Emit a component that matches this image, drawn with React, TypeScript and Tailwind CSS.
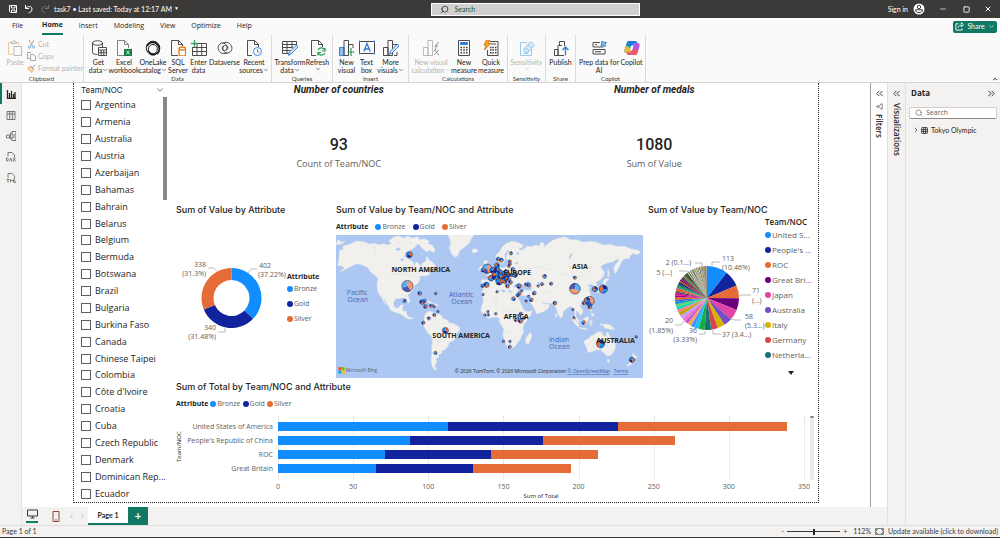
import React, { useState } from 'react';
import { ChevronDown, ChevronRight, ChevronsLeft, ChevronsRight, ChevronUp, Filter, Minus, Search, Square, X } from 'lucide-react';

const BRONZE = '#118dff';
const GOLD = '#12239e';
const SILVER = '#e66c37';

const countries = [
    'Argentina', 'Armenia', 'Australia', 'Austria', 'Azerbaijan', 'Bahamas', 'Bahrain', 'Belarus',
    'Belgium', 'Bermuda', 'Botswana', 'Brazil', 'Bulgaria', 'Burkina Faso', 'Canada', 'Chinese Taipei',
    'Colombia', "Côte d'Ivoire", 'Croatia', 'Cuba', 'Czech Republic', 'Denmark', 'Dominican Rep...', 'Ecuador',
];

const medals = [
    { team: 'United States of America', bronze: 113, gold: 113, silver: 113 },
    { team: "People's Republic of China", bronze: 88, gold: 88, silver: 88 },
    { team: 'ROC', bronze: 71, gold: 71, silver: 71 },
    { team: 'Great Britain', bronze: 65, gold: 65, silver: 65 },
];

const pieValues = [
    113, 88, 71, 65, 58, 46, 40, 37, 36, 33, 24, 21, 20, 20, 20, 19, 19, 17, 15, 15, 14, 13, 11, 11, 11, 10, 10,
    9, 9, 9, 9, 8, 8, 8, 8, 7, 7, 7, 7, 7, 7, 6, 6, 6, 5, 5, 5, 5, 5, 4, 4, 4, 4, 4, 4, 4, 4, 4, 3, 3, 3, 3, 3, 3,
    2, 2, 2, 2, 2, 2, 1, 1, 1, 1, 1, 1,
];

const pieColors = [
    '#118dff', '#12239e', '#e66c37', '#6b007b', '#e044a7', '#744ec2', '#d9b300', '#d64550', '#197278', '#1aab40',
    '#15c6f4', '#4092ff', '#ffa058', '#be5dc9', '#f472d0', '#b5a1ff', '#c4a200', '#ff8080', '#00dbbc', '#5bd667',
    '#0091d5', '#4668c5', '#ff6300', '#99008a', '#ec008c', '#533285', '#99700a', '#ff4141', '#1f9a85', '#25891c',
    '#0057a2', '#002050', '#c94f0f', '#450f54', '#b60064', '#34124f', '#6a5a29', '#1aab40', '#ba141a', '#0c3d37',
    '#0b511f', '#e8d166', '#2e4a7d', '#d8d7bf', '#605e5c', '#f5c869', '#4a7fb0', '#333f48', '#e3d96a', '#5a5a46',
    '#8ea7d8', '#e8c83a', '#3b4a6b', '#c9c9c9', '#6a5a29', '#f0e27a', '#2b2f45', '#9aa0a8', '#d9b300', '#2e4a7d',
    '#a8a58a', '#3a3a3a', '#e0c95a', '#44506b', '#8a8a6a', '#2b2b2b', '#b8a040', '#555555', '#7a6a3a', '#333f48',
    '#88806a', '#444444', '#9a8a5a', '#3b3a39', '#a19f9d', '#c08a6a',
];

const teamLegend = [
    ['United S...', 'bg-[#118dff]'],
    ["People's ...", 'bg-[#12239e]'],
    ['ROC', 'bg-[#e66c37]'],
    ['Great Bri...', 'bg-[#6b007b]'],
    ['Japan', 'bg-[#e044a7]'],
    ['Australia', 'bg-[#744ec2]'],
    ['Italy', 'bg-[#d9b300]'],
    ['Germany', 'bg-[#d64550]'],
    ['Netherla...', 'bg-[#197278]'],
];

const attributeLegend = [
    ['Bronze', 'bg-[#118dff]'],
    ['Gold', 'bg-[#12239e]'],
    ['Silver', 'bg-[#e66c37]'],
];

// x, y, radius, rotation
const bubbles = [
    [240, 164, 9, 0], [234, 258, 17, 0], [225, 303, 5, 200], [271, 280, 6, 90], [319, 280, 4, 0], [278, 306, 7, 90],
    [286, 302, 5, 0], [288, 319, 6, 30], [305, 317, 5, 90], [314, 319, 4, 0], [325, 335, 4, 200], [315, 345, 5, 90],
    [298, 355, 5, 120], [282, 368, 5, 60], [348, 391, 9, 0], [318, 458, 5, 300], [544, 160, 5, 200], [506, 177, 6, 60],
    [516, 180, 6, 120], [541, 184, 5, 0], [541, 192, 5, 30], [538, 199, 4, 100], [502, 196, 7, 240], [473, 206, 14, 20],
    [460, 210, 6, 0], [490, 211, 9, 0], [503, 208, 8, 90], [498, 220, 10, 150], [512, 216, 7, 60], [485, 234, 9, 240],
    [522, 222, 8, 30], [530, 214, 6, 120], [550, 208, 6, 90], [513, 230, 9, 60], [500, 234, 7, 100], [509, 245, 10, 0],
    [520, 240, 8, 160], [530, 233, 7, 90], [538, 238, 6, 60], [527, 246, 6, 200], [543, 247, 6, 100], [536, 224, 7, 0],
    [546, 226, 5, 90], [556, 224, 8, 300], [534, 258, 6, 90], [460, 257, 6, 30], [471, 254, 8, 90], [568, 258, 7, 0],
    [590, 253, 5, 90], [598, 255, 6, 60], [461, 283, 4, 0], [503, 275, 4, 60], [552, 296, 6, 300], [564, 285, 5, 0],
    [570, 281, 5, 30], [576, 273, 4, 200], [597, 289, 4, 200], [605, 299, 6, 0], [590, 303, 4, 90], [614, 279, 6, 30],
    [626, 258, 4, 90], [638, 252, 5, 30], [645, 229, 6, 200], [665, 251, 5, 60], [676, 309, 6, 90], [736, 233, 5, 90],
    [736, 266, 16, 120], [796, 267, 8, 200], [821, 267, 12, 200], [780, 303, 14, 0], [772, 300, 8, 200], [763, 308, 6, 30],
    [781, 321, 6, 90], [730, 328, 4, 0], [733, 353, 4, 60], [762, 367, 6, 0], [475, 335, 4, 200], [466, 345, 4, 200],
    [476, 345, 4, 200], [499, 341, 4, 60], [574, 341, 5, 90], [573, 362, 7, 60], [584, 353, 5, 0], [559, 360, 5, 30],
    [522, 424, 4, 90], [541, 424, 4, 200], [541, 440, 5, 60], [813, 431, 12, 200], [920, 410, 4, 0], [907, 479, 8, 30],
];

const land = [
    'M30 152l12-4-2-9 20-6 22-10 24 3 14 6 16-2 14 5 12-4 14 4 10-5-8-8 12-8 18 3 9 8 14-6 10 10 14-2 6 10-8 8-10 5-14 6-4 14 12 8 12 6 6 12 6-12-2-14 4-10 14 3 6 10 10-3 6 10 12 8 9 12-8 7-18-2-10 8 14 1 4 9-14 5-8 4-10 6-2 9-12 9-5 13-10 9-6 8 5 9 2 11-6 2-5-13-9-2-11 2-12 1-7 11 1 11 6 6 9-1 5-8 9-1-3 12 1 6 11 2 1 9 6 8 11 2 0 4-13 0-12-8-12-8-14-4-15-7-5-12-8-12-6-12 3 14 5 9-7-8-7-15-8-11-6-12-1-20 3-14-10-12-12-9-10-14-14-6-14-5-12 3-12 7-18 10-14 4 16-11-10-6-12-3 4-9z',
    'M190 112l18-5 14 8 12-6 16 5 14-4 8 9 12-3 16 8-6 6 14 6 10 13-6 8-12-6-8 4-14-10-8-12-14 2-10-8-14 6-12-8-14 3z',
    'M355 105l6 12 3 14-5 12 7 18 10 11 9-4 5-15 16-12 14-12 5-12 9-12z',
    'M427 150l8-4 10 3-2 6-9 4-7-4z',
    'M286 345l7-9 9-3 8 5 15 1 12 8 4 9 12 3 5 8 15 4 16 9 3 9-9 10-3 13-8 10-13 5-3 10-9 12-8 2-2 9-10 3 0 9-7 4 2 9-6 10 3 9 5 4-9 0-7-10-3-16 2-18 0-22 2-19-3-15-12-11-11-19-3-12 5-11z',
    'M284 304l14-2 14 8-8 1-10-5zM314 311l9 1 4 5-11 0z',
    'M456 275l10-9 14-5 17-2 10 1 1 9 15 8 8-5 14 5 9-1 5 1 5 14 7 13 8 18 7 11 13 1 9-3-5 15-9 13-11 13-3 13 3 12-7 9-4 13-9 10-8 12-12 4-9-2-5-12-5-14-4-13 3-14-6-14-8-10 1-11-9-5-11 2-14 3-13-10-9-14 3-14 5-13z',
    'M603 396l4 11-5 16-6 9-7-3-1-12 6-10z',
    'M456 262l-1-21 4-2 19 1 0-10-8-7 9-5 11-8 9-5 3-9 5-3 2 11 14-1 9-4 4-11 6-4-8-3-4-8 3-13 6-8-5-2-9 13 3 13-5 11-7 4-5-11-7 3-6-6 1-12 11-9 7-14 14-12 15-6 17 3 20 9-8 9-8-2 4 8 12-3 9-10 12 2 13-5 12 3 6-12 8 4 2 10 10-9 12-9 20-8 19-4 16 9 20 0 18 8 22-3 20 3 18 8 22-2 20 6 22 0 22 8 18 3 9 7-10 7-12-4-8 5-4 10-13 1-9 6-6 14-9 18-6 7-4-16 6-13 11-12-9-3-8 8-17 3-12 5-9 5 2 9 9 8-2 11-12 14-12 6 3 11 5 9-5 6-8-9-4-10-9 0-8 4 9 5-4 7 5 13-2 12-7 9-10 6-10 4-3 4 8 11 1 10-9 8-3-8-8-6-1 15 9 14 1 8-7-6-6-14-1-18-8-4-3-9-10 5-13 11-2 14-6 8-8-16-6-16-3-7-10-7-20-1-7-5 0 5 9 4 6-4 6 7-5 10-16 10-17 6-5-10-12-22-5-4-1-8-2-12-11 1-14-1-3-9 14-7 14 1 10-2-4-8-8 0-9-7-6 2-8 0-7 10 0 8-4 5 0 9-6 0-9-15-11-7 4 11 9 7-9 8-4-12-12-12-11 2-11 11-7 10-7 2z',
    'M463 184l8-4 4 8-2 8 7 9 2 7-16 4 6-10-7-8zM452 199l8-2 2 8-8 7-6-3z',
    'M822 240l10-6 6 6-8 4-4 14-4 11-12 6-8 3-3-3 12-5 7-5zM835 208l4 9-1 15-4-4z',
    'M724 349l7 4 10 11 8 11-3 6-10-9-8-12zM748 382l14 2 12 3-2 2-22-4zM755 361l8-4 9-8 6 4-5 12-5 9-12-3zM780 363l7-3 2 4-5 3 3 9-5-1zM778 323l6 0 3 10-5-1zM784 340l8 0 1 8-7 0zM812 370l10 3 10-2 14 7 10 11-9-1-12-2-10-2-3-6-9-3z',
    'M762 424l14-8 10-10 10-4 8-7 13 1 2 9 9 4 3-14 6 4 4 12 8 9 8 11 1 12-7 13-5 8-14 4-8-10-7-3-2-7-14 1-12 5-14 3-4-13zM833 478l8 0-3 8-5-2z',
    'M908 459l7 7 9 3-8 7-4 9-10 10-10 3 2-5 12-10 4-10z',
    'M676 343l4-2 3 7-4 4zM25 119l12 7 10-3-8 9-19 3z',
];

const slice = (cx: number, cy: number, r: number, from: number, to: number, inner = 0) => {
    const point = (radius: number, turn: number) => {
        const angle = (turn - 0.25) * Math.PI * 2;
        return `${(cx + radius * Math.cos(angle)).toFixed(2)} ${(cy + radius * Math.sin(angle)).toFixed(2)}`;
    };
    const large = to - from > 0.5 ? 1 : 0;
    if (!inner) {
        return `M${cx} ${cy}L${point(r, from)}A${r} ${r} 0 ${large} 1 ${point(r, to)}Z`;
    }
    return `M${point(r, from)}A${r} ${r} 0 ${large} 1 ${point(r, to)}L${point(inner, to)}A${inner} ${inner} 0 ${large} 0 ${point(inner, from)}Z`;
};

/* ---------- ribbon icons ---------- */

const icons: Record<string, React.ReactNode> = {
    paste: (
        <g stroke="#b5b3b1">
            <path d="M5 2.5H1.5v12H6M9.5 2.5h2.500v3" stroke="#eac28c" />
            <path d="M4.500 3.500v-1.500h1.200a1.300 1.300 0 0 1 2.600 0h1.200v1.500z" />
            <path d="M7 6.500h7.500v9H7z" fill="#fafafa" />
        </g>
    ),
    getData: (
        <g>
            <path d="M1.500 3c0-3 10-3 10 0s-10 3-10 0v9.500c0 1.500 2.500 2 5 2M11.500 3v4" />
            <path d="M7.500 7.500h8v8h-8zM7.500 10h8M7.500 12.700h8M10.200 10v5.500M12.800 10v5.500" fill="#fff" />
        </g>
    ),
    excel: (
        <g>
            <path d="M8 15.500H1.500v-15h7l4 4V8M8.500.5v4h4" stroke="#797775" />
            <path d="M8 9h8v7H8z" fill="#107c41" stroke="none" />
            <path d="M10.200 10.500l3.500 4M13.700 10.500l-3.500 4" stroke="#fff" />
        </g>
    ),
    onelake: (
        <g stroke="#1b1a19">
            <circle cx="8" cy="8" r="6.800" strokeWidth="1" />
            <path d="M2 6c2-4 7-5 10-2 3 3 3 7 0 10" strokeWidth="1.800" />
            <path d="M4 12c-2-4 1-7.500 4-7.500 4 0 6 5 2.500 8.500-2 1.500-5 1-6.500-1z" strokeWidth="1" />
            <path d="M3 10c2 4 6 5 9 3l-2 2H6z" fill="#1b1a19" />
        </g>
    ),
    sql: (
        <g>
            <path d="M8 15.500H1.500v-15h7l4 4V6M8.500.5v4h4" />
            <path d="M9 8.500c0-2 6.500-2 6.500 0s-6.500 2-6.500 0v6c0 2 6.500 2 6.500 0v-6" stroke="#e07b1c" fill="#fff" strokeWidth="1.300" />
        </g>
    ),
    enter: (
        <g>
            <path d="M3 3.500h12.500v12H1.500V7M6 3.500v12M10.700 3.500v12M1.500 7.500h14M1.500 11.500h14" />
            <path d="M3.500 0v7M0 3.500h7" stroke="#33a35c" strokeWidth="1.300" />
        </g>
    ),
    dataverse: (
        <g>
            <path d="M13.500 4.500c3 3 1 8.500-3 8.500C5 13 4.500 5.500 8.500 5.500c3 0 3 4.500.5 4.500" />
            <path d="M2.500 11.500c-3-3-1-8.500 3-8.500 5.500 0 6 7.500 2 7.500-3 0-3-4.500-.5-4.500" />
            <path d="M5.500 3c3-1 6-1 8 1.500M10.500 13c-3 1-6 1-8-1.500" />
        </g>
    ),
    recent: (
        <g>
            <path d="M6 15.500H1.500v-15h7l4 4V7M8.500.5v4h4" />
            <circle cx="11.500" cy="11.500" r="4" stroke="#2b7cd3" fill="#fff" />
            <path d="M11.500 9v3h2" stroke="#2b7cd3" />
        </g>
    ),
    transform: (
        <g>
            <path d="M7 13.500H.5v-12h14V5M.5 4.500h14M.5 7.500h10M.5 10.500h8M5 1.500v12M10 1.500v7" />
            <path d="M6.500 15.500l1-3.500 7-7 1.500 2-7 7z" fill="#d5e6f7" stroke="#2b7cd3" />
        </g>
    ),
    refresh: (
        <g>
            <path d="M6 15.500H1.500v-15h7l4 4V7M8.500.5v4h4" />
            <path d="M15 11a3.700 3.700 0 0 0-7-1M8 12a3.700 3.700 0 0 0 7 1M15 8v3h-3M8 15.500V12.500h3" stroke="#2f9a52" strokeWidth="1.200" />
        </g>
    ),
    newVisual: (
        <g>
            <path d="M.5 7.500h4.500v8H.5z" fill="#8fc1ee" stroke="#2b7cd3" />
            <path d="M5 .5h4.500v15H5zM9.500 4.500H14V8M9.500 4.500V12" />
            <path d="M12 8v8M8.500 12h7" stroke="#2f9a52" strokeWidth="1.200" />
        </g>
    ),
    textBox: (
        <g>
            <path d="M.5 1.500h15v12H.5z" stroke="#333" />
            <path d="M4.800 11.500L8 3.500l3.200 8M6 9h4" stroke="#2b7cd3" strokeWidth="1.300" />
            <path d="M0 1h1v1H0zM15 1h1v1h-1zM0 13h1v1H0zM15 13h1v1h-1z" stroke="#2b7cd3" />
        </g>
    ),
    moreVisuals: (
        <g>
            <path d="M.5 7.500h4.500v8H.5zM5 .5h4.500v15H5zM9.500 4.500H14v2M11 15.500h3V12" />
            <path d="M6.500 14.500l1-3.500 7-7 1.500 2-7 7z" fill="#d5e6f7" stroke="#2b7cd3" />
        </g>
    ),
    visualCalc: (
        <g stroke="#b5b3b1">
            <path d="M.5 7.500h4.500v8H.5zM5 .5h4.500v15H5z" />
            <path d="M16 3c-2-1-2.500 1-3 4s-1 4-2 4M11.500 6H15M11.500 10c2 0 2 5 4.500 5M16 10c-2 1-3 4-5 5" stroke="#8f8d8b" />
        </g>
    ),
    measure: (
        <g>
            <path d="M2.500.5h11v15h-11z" />
            <path d="M4.500 2.500h7v2h-7z" fill="#2b7cd3" stroke="#2b7cd3" />
            <path d="M4.500 7.500h1.500M7.300 7.500h1.500M10 7.500h1.500M4.500 10h1.500M7.300 10h1.500M10 10h1.500M4.500 12.800h1.500M7.300 12.800h1.500M10 12.800h1.500" strokeWidth="1.500" />
        </g>
    ),
    quick: (
        <g>
            <path d="M7 1.500h8v14H4.500V10M7.500 4h5.500" />
            <path d="M7 7.500h1.500M9.300 7.500h1.500M12 7.500h1.500M7 10h1.500M9.300 10h1.500M12 10h1.500M7 12.800h1.500M9.300 12.800h1.500M12 12.800h1.500" strokeWidth="1.500" />
            <path d="M3.500 0H7L5 3.500h2.500L1.500 10l1.500-5H1z" fill="#f5a623" stroke="#d9731a" />
        </g>
    ),
    sensitivity: (
        <g stroke="#8cc3ea">
            <path d="M8 2.500H1.500v13h11V9" />
            <path d="M4.500 9.500l7-8 4 3.500-6 7-3.500.5z" fill="#d7eaf8" />
            <path d="M7 8l3 3M9 5l4 3.500M4.500 13.500h5" />
        </g>
    ),
    publish: (
        <g>
            <path d="M1.500 9.500H5v6H1.500zM5 15.500v-10h4M6.500 5.500v-4h5V6M5 15.500h6" />
            <path d="M12.500 15.500v-8M9.500 10l3-3 3 3" stroke="#2b7cd3" strokeWidth="1.300" />
        </g>
    ),
    prep: (
        <g>
            <path d="M9 2.500H2v4.500h10.500M2 9.500h12v4.500H2zM4 4.700h2M4 11.700h6" />
            <path d="M11 1l2 1.500L15.500 2 14 4.500l.5 2-2.500-1-2 1 .5-2.500z" fill="#8fc1ee" stroke="#2b7cd3" />
        </g>
    ),
    copilot: (
        <g stroke="none">
            <path d="M5 1h6c1.500 0 2 1 2.500 2.500H9.500L7 11c-.5 1.500-1 2-2.500 2H2.500C.5 13 0 11.500.5 9.500L2.500 3.500C3 2 3.500 1 5 1z" fill="#25b0b0" />
            <path d="M2 5l-1.500 5C0 12 .8 13 2.500 13h2c1.500 0 2-.5 2.500-2l.5-1.500z" fill="#f2b632" />
            <path d="M3 3c.5-1.500 1-2 2.500-2H11c1.500 0 2 1 2.500 2.500H9.500L8 6H2z" fill="#1f7be0" />
            <path d="M11 15H5c-1.500 0-2-1-2.500-2.500h4L9 5c.5-1.500 1-2 2.500-2h2c2 0 2.500 1.500 2 3.500l-2 6c-.5 1.500-1 2.500-2.500 2.500z" fill="#b558e0" />
            <path d="M11 15H5c-1.500 0-2-1-2.500-2.500h4L8 9.500h6.500l-1 3c-.5 1.500-1 2.500-2.500 2.500z" fill="#f0566c" />
            <path d="M7.200 5.500h2.300l-1.300 5H6z" fill="#fff" />
        </g>
    ),
};

const Icon = ({ name }: { name: string }) => (
    <svg viewBox="0 0 16 16" className="size-4 shrink-0" fill="none" stroke="#3b3a39" strokeWidth="0.9">
        {icons[name]}
    </svg>
);

interface RibbonItemProps {
    icon: string;
    lines: string[];
    width: string;
    menu?: boolean;
    disabled?: boolean;
}

const RibbonItem = ({ icon, lines, width, menu, disabled }: RibbonItemProps) => (
    <button
        disabled={disabled}
        className={`flex shrink-0 flex-col items-center whitespace-nowrap text-[7px] leading-[8px] ${width} ${disabled ? 'text-[#b5b3b1]' : 'text-[#252423]'}`}
    >
        <Icon name={icon} />
        <span className="mt-[2px]">{lines[0]}</span>
        <span className="flex items-center">
            {lines[1]}
            {menu && <ChevronDown className="size-[6px]" />}
        </span>
    </button>
);

const RibbonGroup = ({ label, width, children }: { label: string; width: string; children: React.ReactNode }) => (
    <div className={`flex h-[47px] shrink-0 flex-col items-center justify-between border-r border-[#dddbd9] ${width}`}>
        <div className="flex pt-[5px]">{children}</div>
        <span className="text-[6px] leading-[6px] text-[#3b3a39]">{label}</span>
    </div>
);

const TitleBar = () => (
    <header className="flex h-[18px] shrink-0 items-center bg-[#3b3a39] font-['Lato',sans-serif] text-[7px] text-white">
        <div className="flex flex-[43] items-center">
            <button aria-label="Save" className="ml-2">
                <svg viewBox="0 0 10 10" className="size-[10px]" fill="none" stroke="#fff">
                    <path d="M1.500 1.500h7v7H2.500l-1-1zM3.500 1.500v2.500h3.500V1.500M3.500 8.500V6h3.500v2.500" />
                </svg>
            </button>
            <button aria-label="Undo" className="ml-[6px]">
                <svg viewBox="0 0 10 10" className="size-[10px]" fill="none" stroke="#fff">
                    <path d="M1.500 1v3.500H5M1.500 4.500C4 1.500 8 2 8 5S5.500 8.500 4.500 9" />
                </svg>
            </button>
            <button aria-label="Redo" className="ml-[6px]" disabled>
                <svg viewBox="0 0 10 10" className="size-[10px]" fill="none" stroke="#777573">
                    <path d="M8.500 1v3.500H5M8.500 4.500C6 1.500 2 2 2 5s2.500 3.500 3.500 4" />
                </svg>
            </button>
            <button className="ml-1 flex items-center whitespace-nowrap">
                task7 • Last saved: Today at 12:17 AM
                <span className="ml-[2px] text-[5px]">▼</span>
            </button>
        </div>
        <label className="flex h-[13px] w-[209px] items-center border border-white bg-[#d2d0ce] px-2 text-[#0b5a4c]">
            <Search className="mr-[6px] size-[9px] -scale-x-100 text-[#252423]" />
            <input
                aria-label="Search"
                placeholder="Search"
                className="min-w-0 flex-1 bg-transparent text-[7px] outline-none placeholder:text-[#0b5a4c]"
            />
        </label>
        <div className="flex flex-[36] items-center justify-end">
            <button className="flex items-center gap-[5px]">
                Sign in
                <svg viewBox="0 0 12 12" className="size-3">
                    <circle cx="6" cy="6" r="5.500" fill="#fff" />
                    <circle cx="6" cy="4" r="1.700" fill="none" stroke="#3b3a39" />
                    <path d="M2.500 6.800h7c0 3.800-7 3.800-7 0z" fill="none" stroke="#3b3a39" />
                </svg>
            </button>
            <button aria-label="Minimize" className="ml-[14px]"><Minus className="size-2" /></button>
            <button aria-label="Maximize" className="ml-4"><Square className="size-[7px]" strokeWidth={3} /></button>
            <button aria-label="Close" className="mr-2 ml-[14px]"><X className="size-2" strokeWidth={3} /></button>
        </div>
    </header>
);

const Ribbon = () => (
    <section className="flex h-[65px] shrink-0 flex-col border-b border-[#d6d4d2] bg-[#fafafa]">
        <nav className="flex h-[17px] shrink-0 items-center text-[7px] text-[#252423]">
            <button className="ml-3">File</button>
            <button className="ml-[19px] flex h-[15px] items-center self-end border-b-2 border-[#117865] pb-[2px] font-bold">Home</button>
            <button className="ml-4">Insert</button>
            <button className="ml-4">Modeling</button>
            <button className="ml-4">View</button>
            <button className="ml-4">Optimize</button>
            <button className="ml-4">Help</button>
            <button className="mr-[3px] ml-auto flex h-3 w-11 items-center justify-center gap-[3px] rounded-[2px] bg-[#117865] font-['Lato',sans-serif] text-white">
                <svg viewBox="0 0 10 10" className="size-[9px]" fill="none" stroke="#fff">
                    <path d="M4 2H1v7h7V7M3.500 6.500C4 4 5.500 3.500 7 3.500V5.500L9.500 3 7 .7v1.800" />
                </svg>
                Share
                <ChevronDown className="size-[7px]" />
            </button>
        </nav>
        <div className="flex items-start font-['Lato',sans-serif]">
            <div className="flex h-[47px] w-[84px] shrink-0 flex-col justify-between border-r border-[#dddbd9] text-[7px] text-[#b5b3b1]">
                <div className="flex pt-[5px] pl-[7px]">
                    <button disabled className="flex w-4 flex-col items-center">
                        <Icon name="paste" />
                        <span className="mt-[2px] leading-[8px]">Paste</span>
                    </button>
                    <div className="ml-1 flex flex-col gap-[3px] leading-[9px]">
                        <button disabled className="flex items-center gap-[2px]">
                            <svg viewBox="0 0 9 9" className="size-[9px]" fill="none" stroke="#a9a7a5">
                                <path d="M2 0l3.500 6M7 0L3.500 6" />
                                <circle cx="2.500" cy="7" r="1.200" stroke="#8bb7dd" />
                                <circle cx="6.500" cy="7" r="1.200" stroke="#8bb7dd" />
                            </svg>
                            Cut
                        </button>
                        <button disabled className="flex items-center gap-[2px]">
                            <svg viewBox="0 0 9 9" className="size-[9px]" fill="none" stroke="#a9a7a5">
                                <path d="M3 6.500H.5v-6h3.500M3.500 2.500h3l2 2v4h-5z" />
                            </svg>
                            Copy
                        </button>
                        <button disabled className="flex items-center gap-[2px] whitespace-nowrap">
                            <svg viewBox="0 0 9 9" className="size-[9px]" fill="none" stroke="#a9a7a5">
                                <path d="M.5 4l3-1.500 3 3L4.500 8.500z" fill="#f6d6ae" stroke="#e5b375" />
                                <path d="M4 2l3 3M5.500 3.500L8.500.5" />
                            </svg>
                            Format painter
                        </button>
                    </div>
                </div>
                <span className="text-center text-[6px] leading-[6px] text-[#3b3a39]">Clipboard</span>
            </div>
            <RibbonGroup label="Data" width="w-[188px]">
                <RibbonItem icon="getData" lines={['Get', 'data']} width="w-[23px]" menu />
                <RibbonItem icon="excel" lines={['Excel', 'workbook']} width="w-[28px]" />
                <RibbonItem icon="onelake" lines={['OneLake', 'catalog']} width="w-[30px]" menu />
                <RibbonItem icon="sql" lines={['SQL', 'Server']} width="w-[20px]" />
                <RibbonItem icon="enter" lines={['Enter', 'data']} width="w-[21px]" />
                <RibbonItem icon="dataverse" lines={['Dataverse']} width="w-[31px]" />
                <RibbonItem icon="recent" lines={['Recent', 'sources']} width="w-[28px]" menu />
            </RibbonGroup>
            <RibbonGroup label="Queries" width="w-[61px]">
                <RibbonItem icon="transform" lines={['Transform', 'data']} width="w-[31px]" menu />
                <RibbonItem icon="refresh" lines={['Refresh', '']} width="w-[24px]" menu />
            </RibbonGroup>
            <RibbonGroup label="Insert" width="w-[76px]">
                <RibbonItem icon="newVisual" lines={['New', 'visual']} width="w-[20px]" />
                <RibbonItem icon="textBox" lines={['Text', 'box']} width="w-[20px]" />
                <RibbonItem icon="moreVisuals" lines={['More', 'visuals']} width="w-[28px]" menu />
            </RibbonGroup>
            <RibbonGroup label="Calculations" width="w-[99px]">
                <RibbonItem icon="visualCalc" lines={['New visual', 'calculation']} width="w-[39px]" menu disabled />
                <RibbonItem icon="measure" lines={['New', 'measure']} width="w-[27px]" />
                <RibbonItem icon="quick" lines={['Quick', 'measure']} width="w-[27px]" />
            </RibbonGroup>
            <RibbonGroup label="Sensitivity" width="w-[38px]">
                <RibbonItem icon="sensitivity" lines={['Sensitivity', '']} width="w-[30px]" menu disabled />
            </RibbonGroup>
            <RibbonGroup label="Share" width="w-[30px]">
                <RibbonItem icon="publish" lines={['Publish']} width="w-[28px]" />
            </RibbonGroup>
            <RibbonGroup label="Copilot" width="w-[70px]">
                <RibbonItem icon="prep" lines={['Prep data for', 'AI']} width="w-[42px]" />
                <RibbonItem icon="copilot" lines={['Copilot']} width="w-[23px]" />
            </RibbonGroup>
            <button aria-label="Collapse ribbon" className="mr-[2px] ml-auto self-end">
                <ChevronUp className="size-[6px]" strokeWidth={4} />
            </button>
        </div>
    </section>
);

const viewIcons = [
    { name: 'Report view', d: 'M1.500 1v8.500H10M3.500 4v5M5.500 2v7M7.500 5v4M9 3v6' },
    { name: 'Table view', d: 'M1 1.500h8v8H1zM1 4h8M3.700 1.500v8M6.300 1.500v8' },
    { name: 'Model view', d: 'M.5 4h3v3h-3zM6 .5h4v3.500H6zM6 6h4v3.500H6zM3.500 5.500h1V2H6M4.500 5.500V8H6' },
    { name: 'DAX query view', d: 'M2 4.500v-4h4l2.500 2.500V6M.5 6v3c2.500 0 2.500-3 0-3zM3.500 9.500l1.200-3.500 1.200 3.500M7 6l2.500 3.500M9.500 6L7 9.500' },
    { name: 'TMDL view', d: 'M2 5v-4.500h4l2.500 2.500V6M.5 6.500h3M2 6.500v3M4.500 9.500v-3L6 8l1.500-1.500v3M8.700 6.500v3H10' },
];

const ViewRail = () => (
    <nav className="flex w-[22px] shrink-0 flex-col border-r border-[#e6e4e2] bg-[#f3f2f1]">
        {viewIcons.map(({ name, d }, i) => (
            <button
                key={name}
                aria-label={name}
                className={`flex h-[21px] w-full items-center justify-center border-l-2 pr-[2px] ${i === 0 ? 'border-[#117865]' : 'border-transparent'}`}
            >
                <svg viewBox="0 0 10 10" className="size-[10px]" fill="none" stroke={i === 0 ? '#252423' : '#605e5c'} strokeWidth={i === 0 ? 1.3 : 0.8}>
                    <path d={d} />
                </svg>
            </button>
        ))}
    </nav>
);

const Slicer = () => (
    <div className="flex w-24 shrink-0 flex-col pl-[7px]">
        <div className="flex h-[14px] shrink-0 items-center justify-between pr-[5px] font-['Inter',sans-serif] text-[8px] text-[#252423]">
            Team/NOC
            <ChevronDown className="size-[10px]" strokeWidth={1.5} />
        </div>
        <div className="flex min-h-0 flex-1">
            <ul className="flex min-w-0 flex-1 flex-col">
                {countries.map((country) => (
                    <li key={country} className="flex flex-1 items-center">
                        <label className="flex items-center gap-1 whitespace-nowrap text-[9px] leading-3 text-[#252423]">
                            <input type="checkbox" className="size-[10px] appearance-none border border-[#605e5c] checked:bg-[#605e5c]" />
                            {country}
                        </label>
                    </li>
                ))}
            </ul>
            <div className="mr-[3px] h-[103px] w-1 shrink-0 bg-[#8a8886]" />
        </div>
    </div>
);

const VisualTitle = ({ children }: { children: React.ReactNode }) => (
    <h2 className="font-['Inter',sans-serif] text-[9px] leading-3 font-medium whitespace-nowrap text-[#252423]">{children}</h2>
);

const Dot = ({ color }: { color: string }) => <span className={`size-[6px] shrink-0 rounded-full ${color}`} />;

const AttributeLegend = ({ gap }: { gap: string }) => (
    <div className={`flex items-center text-[7px] leading-2 text-[#605e5c] ${gap}`}>
        <b className="text-[#252423]">Attribute</b>
        {attributeLegend.map(([name, color]) => (
            <span key={name} className="flex items-center gap-[1px]">
                <Dot color={color} />
                {name}
            </span>
        ))}
    </div>
);

const Card = ({ title, value, caption }: { title: string; value: string; caption: string }) => (
    <div className="flex flex-col items-center">
        <h2 className="font-['Roboto',sans-serif] text-[10px] leading-[14px] font-bold italic">{title}</h2>
        <p className="mt-[38px] font-['Roboto',sans-serif] text-[16px] leading-5 font-medium text-[#252423]">{value}</p>
        <p className="mt-[3px] text-[9px] leading-3 text-[#605e5c]">{caption}</p>
    </div>
);

const DonutVisual = () => {
    const parts = [
        { from: 0, to: 0.3722, color: BRONZE },
        { from: 0.3722, to: 0.687, color: GOLD },
        { from: 0.687, to: 1, color: SILVER },
    ];
    return (
        <div>
            <VisualTitle>Sum of Value by Attribute</VisualTitle>
            <div className="flex">
                <svg viewBox="176 216 111 160" className="h-[160px] w-[111px] shrink-0 overflow-visible text-[7px]" fill="#605e5c">
                    {parts.map(({ from, to, color }) => (
                        <path key={color} d={slice(231.5, 298, 30, from, to, 18)} fill={color} />
                    ))}
                    <path d="M248 273l3-4h6M217 271l-3-3h-6M225 328v4h-7" fill="none" stroke="#a19f9d" strokeWidth="0.700" />
                    <text x="259" y="268">402</text>
                    <text x="258" y="277">(37.22%)</text>
                    <text x="206" y="267" textAnchor="end">338</text>
                    <text x="206" y="276" textAnchor="end">(31.3%)</text>
                    <text x="216" y="330" textAnchor="end">340</text>
                    <text x="216" y="339" textAnchor="end">(31.48%)</text>
                </svg>
                <div className="pt-[57px] text-[7px] leading-2 text-[#605e5c]">
                    <b className="text-[#252423]">Attribute</b>
                    <ul className="mt-1 flex flex-col gap-[7px]">
                        {attributeLegend.map(([name, color]) => (
                            <li key={name} className="flex items-center gap-[1px]">
                                <Dot color={color} />
                                {name}
                            </li>
                        ))}
                    </ul>
                </div>
            </div>
        </div>
    );
};

const Bubble = ({ x, y, r, turn }: { x: number; y: number; r: number; turn: number }) => (
    <g transform={`rotate(${turn} ${x} ${y})`}>
        <path d={slice(x, y, r, 0, 0.4)} fill={r > 13 ? '#f09a78' : SILVER} />
        <path d={slice(x, y, r, 0.4, 0.7)} fill={r > 13 ? '#4a55b5' : GOLD} />
        <path d={slice(x, y, r, 0.7, 1)} fill={r > 13 ? '#5aaefa' : BRONZE} />
        <circle cx={x} cy={y} r={r} fill="none" stroke="#22283f" strokeWidth={r > 6 ? 1.6 : 1} />
    </g>
);

const MapVisual = () => (
    <div className="min-w-0">
        <VisualTitle>Sum of Value by Team/NOC and Attribute</VisualTitle>
        <div className="mt-[7px] mb-1">
            <AttributeLegend gap="gap-[7px]" />
        </div>
        <svg viewBox="20 105 920 430" className="w-[307px] bg-[#abc7f2]">
            <g fill="#f1f0ec" stroke="#dfe3e6" strokeWidth="1.500">
                {land.map((d) => <path key={d} d={d} />)}
            </g>
            <g fill="#abc7f2">
                <path d="M254 150l14 4 10 12 14 8-3 10-10 4-4 10-8-9-12-6-8-14zM550 262l6-9 14-2 12 4-2 5-16-1zM594 242l8 4 2 10 4 8-7 2-4-10-6-8zM268 230l14-3 10 8 8 3-12 1-8 6-4-8z" />
                <path d="M560 160l8-3 1 5-6 3zM556 188l8-2 2 4-8 3zM198 148l10-6 6 6-8 5zM212 178l9-3 3 5-9 4zM718 172l8-12 3 2-7 14zM625 246l7 2-1 6-6-2zM568 345l6-1 1 7-6 0z" />
            </g>
            <g fill="none" stroke="#d5dbe2" strokeWidth="1.200">
                <path d="M174 222h60l30 10M138 135v26l14 14M205 280l30 10M310 365l14 22M345 400l-14 22M325 420l-5 60M500 285v40M545 280v30M525 330h40M520 390l30 14M560 200l40 6 30-6 40 12M690 220l44 10 44-6M640 280l30-12M700 245l-30 22M832 400v40M792 404v44" />
            </g>
            {bubbles.map(([x, y, r, turn]) => (
                <Bubble key={`${x}-${y}`} x={x} y={y} r={r} turn={turn} />
            ))}
            <g className="text-[21px] font-bold" fill="#252423" textAnchor="middle">
                <text x="274" y="215">NORTH AMERICA</text>
                <text x="563" y="225">EUROPE</text>
                <text x="751" y="208">ASIA</text>
                <text x="560" y="358">AFRICA</text>
                <text x="395" y="414">SOUTH AMERICA</text>
                <text x="858" y="430">AUSTRALIA</text>
            </g>
            <g className="text-[21px]" fill="#4668b8" textAnchor="middle">
                <text x="83" y="285">Pacific</text>
                <text x="85" y="307">Ocean</text>
                <text x="395" y="292">Atlantic</text>
                <text x="397" y="313">Ocean</text>
                <text x="688" y="426">Indian</text>
                <text x="690" y="447">Ocean</text>
            </g>
            <path d="M27 501h9v9h-9z" fill="#f25022" />
            <path d="M37 501h9v9h-9z" fill="#7fba00" />
            <path d="M27 511h9v9h-9z" fill="#00a4ef" />
            <path d="M37 511h9v9h-9z" fill="#ffb900" />
            <text x="49" y="516" className="text-[14px]" fill="#605e5c">Microsoft Bing</text>
            <g className="text-[15px]" fill="#252423">
                <text x="376" y="519">© 2026 TomTom, © 2026 Microsoft Corporation</text>
                <a href="#osm"><text x="713" y="519" fill="#3f5fb0" textDecoration="underline">© OpenStreetMap</text></a>
                <a href="#terms"><text x="852" y="519" fill="#3f5fb0" textDecoration="underline">Terms</text></a>
            </g>
        </svg>
    </div>
);

const PieVisual = () => {
    const total = pieValues.reduce((sum, value) => sum + value, 0);
    let turn = 0;
    return (
        <div>
            <VisualTitle>Sum of Value by Team/NOC</VisualTitle>
            <div className="flex">
                <svg viewBox="648 216 117 160" className="h-[160px] w-[117px] shrink-0 overflow-visible text-[7px]" fill="#605e5c">
                    {pieValues.map((value, i) => {
                        const from = turn;
                        turn += value / total;
                        return <path key={i} d={slice(707, 298, 32, from, turn)} fill={pieColors[i % pieColors.length]} />;
                    })}
                    <path d="M712 266v-4h8M739 296l3-1h9M731 319l4 1h6M713 330v4h8M705 331v3h-6M684 321l-3 4h-6M690 273l-4-2h-7M702 266v-3h-7" fill="none" stroke="#a19f9d" strokeWidth="0.700" />
                    <text x="722" y="261">113</text>
                    <text x="722" y="270">(10.46%)</text>
                    <text x="752" y="293">71</text>
                    <text x="752" y="303">(...)</text>
                    <text x="745" y="319">58</text>
                    <text x="745" y="328">(5.3...)</text>
                    <text x="722" y="337">37 (3.4...)</text>
                    <text x="697" y="333" textAnchor="end">36</text>
                    <text x="697" y="342" textAnchor="end">(3.33%)</text>
                    <text x="673" y="323" textAnchor="end">20</text>
                    <text x="673" y="333" textAnchor="end">(1.85%)</text>
                    <text x="672" y="275" textAnchor="end">5 (...)</text>
                    <text x="691" y="265" textAnchor="end">2 (0.1...)</text>
                </svg>
                <div className="text-[8px] text-[#605e5c]">
                    <b className="block leading-[11px] font-semibold text-[#252423]">Team/NOC</b>
                    {teamLegend.map(([name, color]) => (
                        <span key={name} className="flex h-[15px] items-center gap-[1px] whitespace-nowrap">
                            <Dot color={color} />
                            {name}
                        </span>
                    ))}
                    <svg viewBox="0 0 6 4" className="mt-[9px] ml-[23px] w-[6px]"><path d="M0 0h6L3 4z" fill="#252423" /></svg>
                </div>
            </div>
        </div>
    );
};

const BarVisual = () => {
    const ticks = [0, 50, 100, 150, 200, 250, 300, 350];
    const max = 350;
    return (
        <div className="flex min-h-0 flex-1 flex-col pr-1 pl-[6px]">
            <VisualTitle>Sum of Total by Team/NOC and Attribute</VisualTitle>
            <div className="mt-[7px]">
                <AttributeLegend gap="gap-[2px]" />
            </div>
            <div className="mt-2 flex">
                <span className="flex h-[62px] w-[7px] rotate-180 items-center justify-center text-[6px] leading-[7px] text-[#252423] [writing-mode:vertical-rl]">
                    Team/NOC
                </span>
                <div className="flex w-[90px] flex-col items-end gap-[5px] pt-[6px] text-[7px] leading-[9px] whitespace-nowrap text-[#605e5c]">
                    {medals.map(({ team }) => <span key={team}>{team}</span>)}
                </div>
                <div className="ml-[5px] min-w-0 flex-1">
                    <div className="relative flex h-[64px] flex-col gap-[5px] pt-[6px]">
                        {ticks.map((tick) => (
                            <span
                                key={tick}
                                className="absolute inset-y-0 border-l border-dotted border-[#dddbd9]"
                                style={{ left: `${(tick / max) * 100}%` }}
                            />
                        ))}
                        {medals.map(({ team, bronze, gold, silver }) => (
                            <div key={team} className="relative flex h-[9px]">
                                <span className="bg-[#118dff]" style={{ width: `${(bronze / max) * 100}%` }} />
                                <span className="bg-[#12239e]" style={{ width: `${(gold / max) * 100}%` }} />
                                <span className="bg-[#e66c37]" style={{ width: `${(silver / max) * 100}%` }} />
                            </div>
                        ))}
                    </div>
                    <div className="mt-[3px] flex justify-between text-[7px] leading-2 text-[#605e5c]">
                        {ticks.map((tick) => (
                            <span key={tick} className="flex w-0 justify-center">{tick}</span>
                        ))}
                    </div>
                    <p className="text-center text-[6px] leading-[10px] text-[#252423]">Sum of Total</p>
                </div>
                <div className="ml-[6px] flex h-[64px] w-1 flex-col rounded-full bg-[#edebe9]">
                    <span className="h-[2px] rounded-full bg-[#8a8886]" />
                </div>
            </div>
        </div>
    );
};

const ReportPage = () => (
    <main className="flex min-h-0 min-w-0 flex-1 bg-white px-[51px] pb-1">
        <div className="flex min-w-0 flex-1 border-x border-b border-dotted border-[#252423]">
            <Slicer />
            <div className="flex min-w-0 flex-1 flex-col">
                <div className="grid h-[121px] shrink-0 grid-cols-[338fr_294fr] pr-[17px]">
                    <Card title="Number of countries" value="93" caption="Count of Team/NOC" />
                    <Card title="Number of medals" value="1080" caption="Sum of Value" />
                </div>
                <div className="grid h-[177px] shrink-0 grid-cols-[160fr_312fr_167fr] pr-[3px] pl-[6px]">
                    <DonutVisual />
                    <MapVisual />
                    <PieVisual />
                </div>
                <BarVisual />
            </div>
        </div>
    </main>
);

const PageTabs = () => (
    <nav className="flex h-[18px] shrink-0 items-stretch bg-[#f3f2f1] font-['Lato',sans-serif] text-[7px]">
        <button aria-label="Desktop layout" className="mt-[2px] ml-1 flex h-[14px] w-3 justify-center border-b-2 border-[#117865]">
            <svg viewBox="0 0 11 10" className="h-[10px] w-[11px]" fill="none" stroke="#3b3a39">
                <path d="M.5 1h10v6H.5zM3.500 9h4M5.500 7v2" />
            </svg>
        </button>
        <button aria-label="Mobile layout" className="ml-3 flex w-3 items-center justify-center">
            <svg viewBox="0 0 8 11" className="h-[11px] w-2" fill="none" stroke="#8a4a3a">
                <path d="M1 .5h6v10H1zM3 9h2" />
            </svg>
        </button>
        <button aria-label="Previous page" className="ml-[6px] text-[#a19f9d]"><ChevronRight className="size-[7px] rotate-180" /></button>
        <button aria-label="Next page" className="ml-1 text-[#a19f9d]"><ChevronRight className="size-[7px]" /></button>
        <button className="ml-[2px] w-10 border-b-2 border-[#117865] bg-white font-bold">Page 1</button>
        <button aria-label="New page" className="w-5 bg-[#117865] text-[12px] leading-none font-bold text-white">+</button>
    </nav>
);

const DataPane = () => (
    <aside className="w-[95px] shrink-0 border-l border-[#e1dfdd] bg-[#f3f2f1] pr-[3px] pl-[3px]">
        <div className="flex h-5 items-center justify-between pl-[2px]">
            <h2 className="text-[8px] font-bold text-[#252423]">Data</h2>
            <button aria-label="Collapse data pane"><ChevronsRight className="size-[11px]" /></button>
        </div>
        <label className="mt-[4px] flex h-3 items-center rounded-[2px] border border-[#d2d0ce] border-b-[#8a8886] bg-white px-[5px]">
            <Search className="mr-[3px] size-2 text-[#605e5c]" />
            <input aria-label="Search fields" placeholder="Search" className="min-w-0 flex-1 text-[7px] outline-none placeholder:text-[#605e5c]" />
        </label>
        <button className="mt-[6px] flex items-center pl-[3px] font-['Lato',sans-serif] text-[7px] leading-[10px] whitespace-nowrap text-[#252423]">
            <ChevronRight className="mr-[1px] size-2" />
            <svg viewBox="0 0 8 8" className="mr-[3px] size-[7px]" fill="none" stroke="#252423" strokeWidth="0.900">
                <rect x="0.500" y="0.500" width="7" height="7" rx="1.500" />
                <path d="M.5 3h7M.5 5.200h7M3 .5v7M5.200 .5v7" />
            </svg>
            Tokyo Olympic
        </button>
    </aside>
);

const StatusBar = ({ zoom, onZoom }: { zoom: number; onZoom: (value: number) => void }) => (
    <footer className="flex h-[13px] shrink-0 items-center border-t border-b border-t-[#e1dfdd] border-b-[#3b3a39] bg-[#f3f2f1] px-[2px] font-['Lato',sans-serif] text-[7px] whitespace-nowrap text-[#3b3a39]">
        Page 1 of 1
        <button aria-label="Zoom out" className="ml-auto">-</button>
        <input
            type="range"
            aria-label="Zoom"
            min={10}
            max={214}
            value={zoom}
            onChange={(e) => onZoom(Number(e.target.value))}
            className="mx-[3px] h-2 w-[53px] appearance-none bg-[linear-gradient(#3b3a39,#3b3a39)] bg-[length:100%_1px] bg-center bg-no-repeat [&::-webkit-slider-thumb]:h-[6px] [&::-webkit-slider-thumb]:w-[2px] [&::-webkit-slider-thumb]:appearance-none [&::-webkit-slider-thumb]:bg-[#252423]"
        />
        <button aria-label="Zoom in">+</button>
        <span className="ml-[6px]">{zoom}%</span>
        <button aria-label="Fit to page" className="mr-1 ml-[4px]">
            <svg viewBox="0 0 9 7" className="h-[7px] w-[9px]" fill="none" stroke="#3b3a39">
                <path d="M.5.5h8v6h-8z" strokeWidth="0.600" />
                <path d="M1.500 3V1.500H3M6 1.500h1.500V3M7.500 4v1.500H6M3 5.500H1.500V4" strokeWidth="0.600" />
            </svg>
        </button>
        <button>Update available (click to download)</button>
    </footer>
);

const App: React.FC = () => {
    const [zoom, setZoom] = useState(112);

    return (
        <div className="flex h-screen flex-col overflow-hidden bg-white font-['Open_Sans','Noto_Sans',sans-serif] text-[#252423]">
            <TitleBar />
            <Ribbon />
            <div className="flex min-h-0 flex-1">
                <ViewRail />
                <div className="flex min-w-0 flex-1 flex-col">
                    <div className="flex min-h-0 flex-1">
                        <ReportPage />
                        <aside className="flex w-[17px] shrink-0 flex-col items-center border-l border-[#a19f9d] bg-white pt-[5px]">
                            <button aria-label="Expand filters"><ChevronsLeft className="size-[11px]" /></button>
                            <Filter className="mt-1 size-[7px] rotate-90" />
                            <span className="mt-1 text-[8px] leading-[10px] font-semibold [writing-mode:vertical-rl]">Filters</span>
                        </aside>
                    </div>
                    <PageTabs />
                </div>
                <aside className="flex w-[18px] shrink-0 flex-col items-center border-l border-[#e1dfdd] bg-[#f3f2f1] pt-[5px]">
                    <button aria-label="Expand visualizations"><ChevronsLeft className="size-[11px]" /></button>
                    <span className="mt-1 text-[8px] leading-[10px] font-semibold [writing-mode:vertical-rl]">Visualizations</span>
                </aside>
                <DataPane />
            </div>
            <StatusBar zoom={zoom} onZoom={setZoom} />
        </div>
    );
};

export default App;
